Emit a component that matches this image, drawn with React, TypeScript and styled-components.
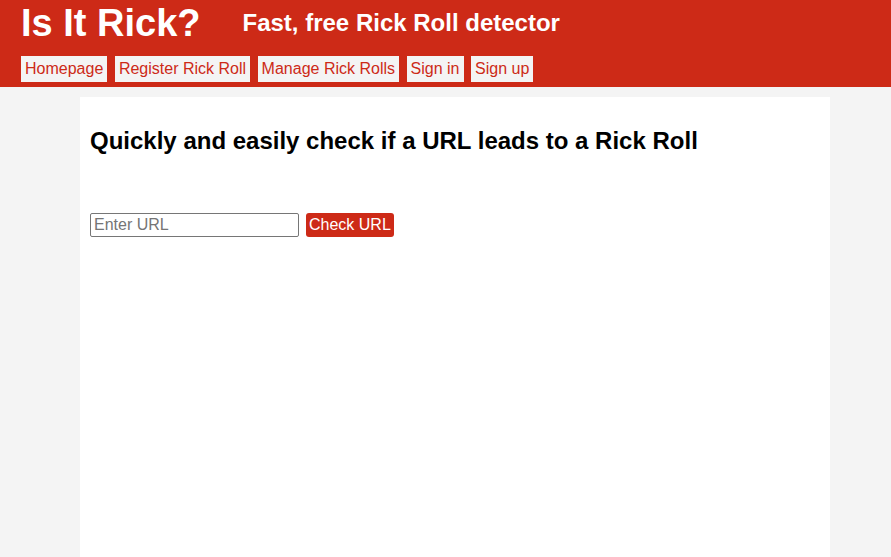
import React from "react";
import styled, { createGlobalStyle } from "styled-components";

const GlobalStyle = createGlobalStyle`
  html, body { margin: 0; padding: 0; background: #f4f4f4; }
  body { font-family: "Liberation Sans", Arial, sans-serif; }
  * { box-sizing: border-box; }
`;

const Header = styled.header`
  background: #cd2a17;
  height: 87px;
  padding: 0 21px;
  display: flex;
  flex-direction: column;
`;

const TitleRow = styled.div`
  display: flex;
  align-items: flex-start;
  gap: 42px;
`;

const SiteTitle = styled.h1`
  margin: 0;
  font-size: 38px;
  line-height: 46px;
  font-weight: bold;
  color: #ffffff;
`;

const Tagline = styled.p`
  margin: 6px 0 0;
  font-size: 24px;
  line-height: 34px;
  font-weight: bold;
  color: #ffffff;
`;

const Nav = styled.nav`
  display: flex;
  gap: 7.6px;
  margin-top: 10px;
`;

const NavLink = styled.a`
  display: block;
  background: #f4f4f4;
  color: #cd2a17;
  font-size: 16px;
  line-height: 18px;
  padding: 4px 4px;
  text-decoration: none;
`;

const Main = styled.main`
  width: 750px;
  margin: 10px auto 0 80px;
  background: #ffffff;
  min-height: 460px;
  padding: 1px 10px 0 10px;
`;

const Heading = styled.h2`
  font-size: 24px;
  font-weight: bold;
  color: #000000;
  margin: 29px 0 58px;
  line-height: 28px;
`;

const Form = styled.form`
  display: flex;
  gap: 7px;
  align-items: stretch;
`;

const UrlInput = styled.input`
  width: 209px;
  height: 24px;
  border: 1px solid #767676;
  border-radius: 2px;
  font-family: "Liberation Sans", Arial, sans-serif;
  font-size: 16px;
  padding: 1px 3px;
  color: #000;
  &::placeholder { color: #757575; }
`;

const CheckButton = styled.button`
  height: 24px;
  background: #cd2a17;
  color: #ffffff;
  border: none;
  border-radius: 3px;
  font-family: "Liberation Sans", Arial, sans-serif;
  font-size: 16px;
  padding: 0 3px;
  cursor: pointer;
`;

const links = ["Homepage", "Register Rick Roll", "Manage Rick Rolls", "Sign in", "Sign up"];

export default function App() {
  return (
    <>
      <GlobalStyle />
      <Header>
        <TitleRow>
          <SiteTitle>Is It Rick?</SiteTitle>
          <Tagline>Fast, free Rick Roll detector</Tagline>
        </TitleRow>
        <Nav>
          {links.map((l) => (
            <NavLink key={l} href="#">{l}</NavLink>
          ))}
        </Nav>
      </Header>
      <Main>
        <Heading>Quickly and easily check if a URL leads to a Rick Roll</Heading>
        <Form onSubmit={(e) => e.preventDefault()}>
          <UrlInput type="text" placeholder="Enter URL" />
          <CheckButton type="submit">Check URL</CheckButton>
        </Form>
      </Main>
    </>
  );
}
